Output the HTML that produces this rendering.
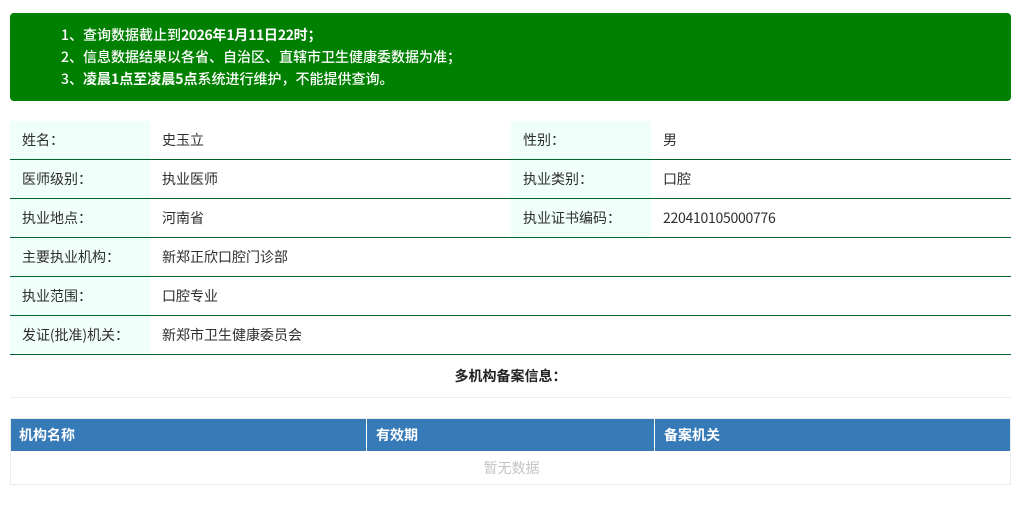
<!DOCTYPE html>
<html lang="zh-CN">
<head>
<meta charset="utf-8">
<title>查询</title>
<style>
html,body{margin:0;padding:0;background:#fff;}
body{width:1018px;height:521px;position:relative;overflow:hidden;font-family:"Noto Sans CJK SC","Liberation Sans",sans-serif;font-size:14px;color:#2e2e2e;}
div{position:absolute;box-sizing:border-box;white-space:nowrap;}
.notice{left:10px;top:13px;width:1001px;height:88px;background:#008000;border-radius:4px;}
.n{left:61px;height:22px;line-height:22px;color:#fff;font-weight:500;font-size:14px;}
.n b{font-weight:700;}
.d{letter-spacing:-.42px;}
.lb{width:140px;height:39px;background:#f0fff9;}
.line{left:10px;width:1001px;height:1px;background:#00622f;}
.t{height:20px;line-height:20px;}
.th{top:419px;height:32px;background:#367ab7;color:#fff;font-weight:700;line-height:32px;padding-left:8px;}
</style>
</head>
<body>
<div class="notice"></div>
<div class="n" style="top:24px">1、查询数据截止到<b><span class="d">2026</span>年<span class="d">1</span>月<span class="d">11</span>日<span class="d">22</span>时；</b></div>
<div class="n" style="top:46px">2、信息数据结果以各省、自治区、直辖市卫生健康委数据为准；</div>
<div class="n" style="top:68px">3、<b>凌晨1点至凌晨5点</b>系统进行维护，不能提供查询。</div>

<div class="lb" style="left:10px;top:121px"></div>
<div class="lb" style="left:10px;top:160px"></div>
<div class="lb" style="left:10px;top:199px"></div>
<div class="lb" style="left:10px;top:238px"></div>
<div class="lb" style="left:10px;top:277px"></div>
<div class="lb" style="left:10px;top:316px"></div>
<div class="lb" style="left:511px;top:121px"></div>
<div class="lb" style="left:511px;top:160px"></div>
<div class="lb" style="left:511px;top:199px"></div>

<div class="line" style="top:159px"></div>
<div class="line" style="top:198px"></div>
<div class="line" style="top:237px"></div>
<div class="line" style="top:276px"></div>
<div class="line" style="top:315px"></div>
<div class="line" style="top:354px"></div>

<div class="t" style="left:22px;top:130px">姓名：</div>
<div class="t" style="left:162px;top:130px">史玉立</div>
<div class="t" style="left:523px;top:130px">性别：</div>
<div class="t" style="left:663px;top:130px">男</div>

<div class="t" style="left:22px;top:169px">医师级别：</div>
<div class="t" style="left:162px;top:169px">执业医师</div>
<div class="t" style="left:523px;top:169px">执业类别：</div>
<div class="t" style="left:663px;top:169px">口腔</div>

<div class="t" style="left:22px;top:208px">执业地点：</div>
<div class="t" style="left:162px;top:208px">河南省</div>
<div class="t" style="left:523px;top:208px">执业证书编码：</div>
<div class="t" style="left:663px;top:208px;letter-spacing:-.27px">220410105000776</div>

<div class="t" style="left:22px;top:247px">主要执业机构：</div>
<div class="t" style="left:162px;top:247px">新郑正欣口腔门诊部</div>

<div class="t" style="left:22px;top:286px">执业范围：</div>
<div class="t" style="left:162px;top:286px">口腔专业</div>

<div class="t" style="left:22px;top:325px;letter-spacing:-.06px">发证(批准)机关：</div>
<div class="t" style="left:162px;top:325px">新郑市卫生健康委员会</div>

<div class="t" style="left:10px;width:1001px;top:366px;text-align:center;font-weight:700;color:#222;">多机构备案信息：</div>
<div style="left:10px;top:397px;width:1001px;height:1px;background:#eee"></div>

<div style="left:10px;top:418px;width:1001px;height:67px;border:1px solid #ebebeb;"></div>
<div class="th" style="left:11px;width:355px">机构名称</div>
<div class="th" style="left:367px;width:287px;padding-left:9px">有效期</div>
<div class="th" style="left:655px;width:355px;padding-left:9px">备案机关</div>
<div class="t" style="left:12px;width:999px;top:458px;text-align:center;color:#c4c4c4;">暂无数据</div>
</body>
</html>
